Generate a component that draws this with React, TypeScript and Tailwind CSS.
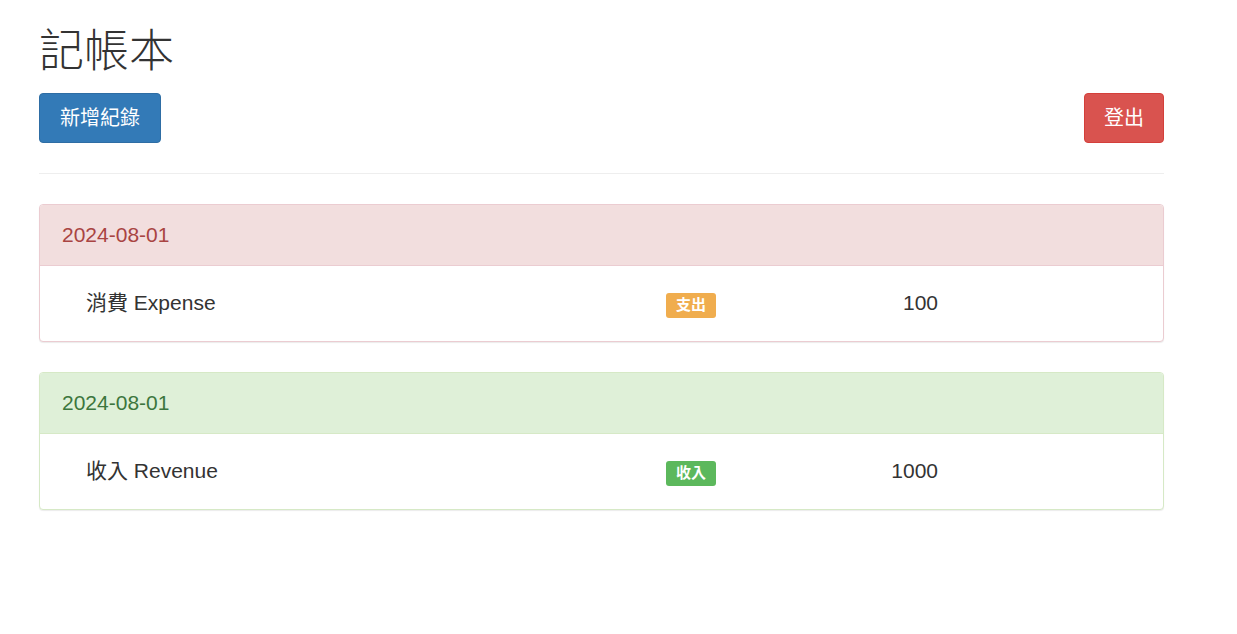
import React from 'react';

type Entry = {
	date: string;
	name: string;
	type: 'expense' | 'revenue';
	amount: number;
};

const entries: Entry[] = [
	{ date: '2024-08-01', name: '消費 Expense', type: 'expense', amount: 100 },
	{ date: '2024-08-01', name: '收入 Revenue', type: 'revenue', amount: 1000 },
];

const font = { fontFamily: '"Liberation Sans", "Noto Sans CJK TC", sans-serif' };

const EntryPanel: React.FC<{ entry: Entry }> = ({ entry }) => {
	const isExpense = entry.type === 'expense';
	return (
		<div
			className={`mb-[30px] rounded-[4px] border bg-white shadow-[0_1px_1px_rgba(0,0,0,0.08)] ${
				isExpense ? 'border-[#ebccd1]' : 'border-[#d6e9c6]'
			}`}
		>
			<div
				className={`h-[61px] flex items-center px-[22px] rounded-t-[3px] border-b text-[21px] ${
					isExpense
						? 'bg-[#f2dede] text-[#a94442] border-[#ebccd1]'
						: 'bg-[#dff0d8] text-[#3c763d] border-[#d6e9c6]'
				}`}
			>
				{entry.date}
			</div>
			<div className="h-[75px] flex items-center pl-[46px] text-[21px] text-[#333]">
				<div className="w-[580px] -mt-[1px]">{entry.name}</div>
				<span
					className={`w-[50px] h-[25px] mt-[4px] flex items-center justify-center rounded-[3px] text-white text-[15px] font-bold ${
						isExpense ? 'bg-[#f0ad4e]' : 'bg-[#5cb85c]'
					}`}
				>
					{isExpense ? '支出' : '收入'}
				</span>
				<div className="w-[222px] text-right -mt-[1px]">{entry.amount}</div>
			</div>
		</div>
	);
};

export default function App() {
	return (
		<div className="min-h-screen bg-white text-[#333]" style={font}>
			<div className="w-[1125px] ml-[39px]">
				<h1 className="pt-[28px] text-[45px] leading-[48px] font-light text-[#333]">記帳本</h1>
				<div className="flex justify-between items-center mt-[17px]">
					<button className="h-[50px] px-[20px] rounded-[4px] border border-[#2e6da4] bg-[#337ab7] text-white text-[20px]">
						新增紀錄
					</button>
					<button className="h-[50px] px-[19px] rounded-[4px] border border-[#d43f3a] bg-[#d9534f] text-white text-[20px]">
						登出
					</button>
				</div>
				<hr className="mt-[30px] mb-[30px] border-t border-[#eee]" />
				{entries.map((entry, i) => (
					<EntryPanel key={i} entry={entry} />
				))}
			</div>
		</div>
	);
}
